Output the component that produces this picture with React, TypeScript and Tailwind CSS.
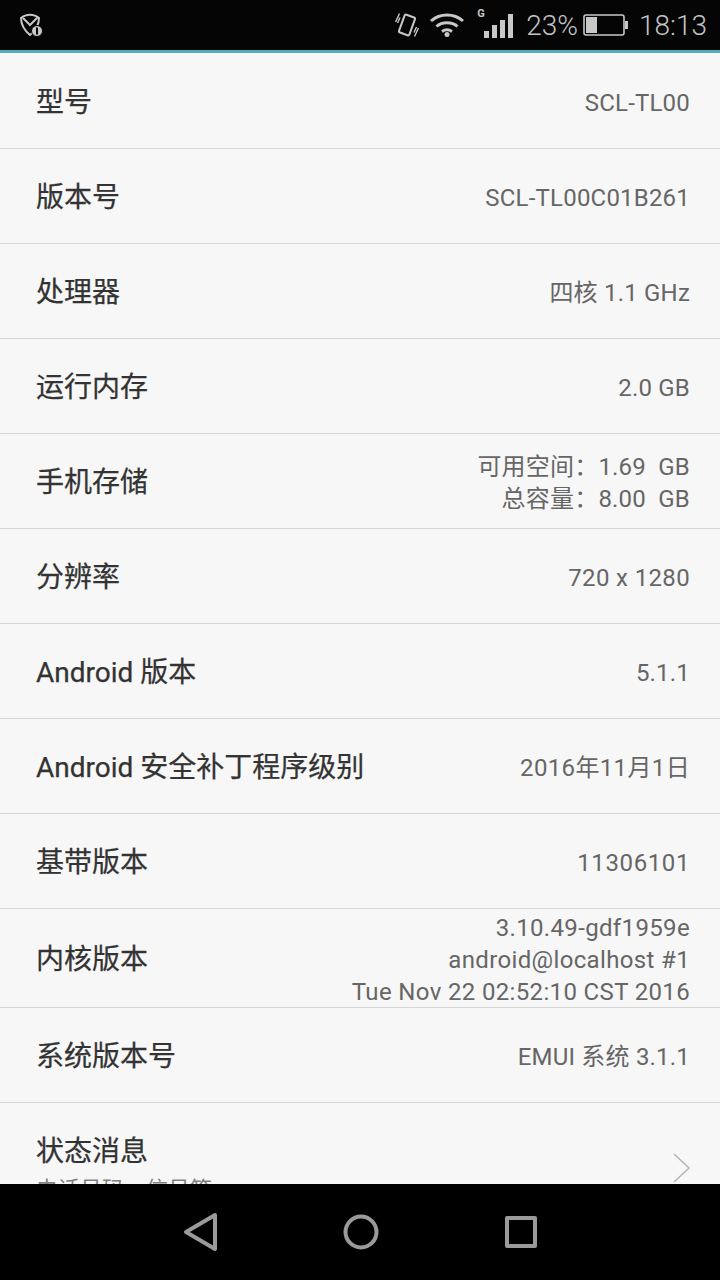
const rows: { label: string; value: string[]; h?: string; t?: string }[] = [
  { label: "型号", value: ["SCL-TL00"] },
  { label: "版本号", value: ["SCL-TL00C01B261"] },
  { label: "处理器", value: ["四核 1.1 GHz"] },
  { label: "运行内存", value: ["2.0 GB"] },
  { label: "手机存储", value: ["可用空间：1.69  GB", "总容量：8.00  GB"] },
  { label: "分辨率", value: ["720 x 1280"], t: "tracking-[0.35px]" },
  { label: "Android 版本", value: ["5.1.1"] },
  { label: "Android 安全补丁程序级别", value: ["2016年11月1日"], t: "tracking-[0.35px]" },
  { label: "基带版本", value: ["11306101"], t: "tracking-[0.6px]" },
  { label: "内核版本", value: ["3.10.49-gdf1959e", "android@localhost #1", "Tue Nov 22 02:52:10 CST 2016"], h: "tall", t: "tracking-[0.35px]" },
  { label: "系统版本号", value: ["EMUI 系统 3.1.1"] },
];

function Row({ label, value, h, t }: { label: string; value: string[]; h?: string; t?: string }) {
  return (
    <div className={`flex items-center justify-between border-b border-[#d6d6d6] pl-[36px] pr-[30px] pt-[4px] ${h === "tall" ? "h-[99px]" : "h-[95px]"}`}>
      <div className="text-[28px] leading-[36px] text-[#333333] whitespace-pre [-webkit-text-stroke:0.25px_#333333]">{label}</div>
      <div className={`flex flex-col items-end text-[24px] leading-[32px] text-[#666666] whitespace-pre ${t ?? "tracking-[0.2px]"}`}>
        {value.map((v) => (
          <div key={v}>{v}</div>
        ))}
      </div>
    </div>
  );
}

export default function App() {
  return (
    <div className="flex h-[1280px] w-[720px] flex-col overflow-hidden bg-[#f7f7f7] font-['Roboto','Noto_Sans_CJK_SC',sans-serif]">
      <div className="flex h-[50px] shrink-0 items-center justify-between bg-[#050505] pl-[19px] pr-[13px] text-[#c9c9c9]">
        <svg width="26" height="26" viewBox="0 0 26 26" fill="none" stroke="#c8c8c8" strokeWidth="2">
          <path d="M2 6 C7 1.5 15 1.5 20 6 C20 12 17 18 11 23 C5 18 2 12 2 6 Z" strokeLinejoin="round" />
          <path d="M4 6 L11 13 L19 5" />
          <circle cx="18" cy="19" r="5.5" fill="#c8c8c8" stroke="#050505" strokeWidth="1" />
          <rect x="17" y="15.5" width="2" height="7" fill="#050505" stroke="none" />
        </svg>
        <div className="flex items-center">
          <svg width="24" height="26" viewBox="0 0 24 26" fill="none" stroke="#c8c8c8" strokeWidth="2" className="mr-[11px]">
            <rect x="-5.5" y="-9.5" width="11" height="19" rx="1.5" transform="translate(12 13) rotate(20)" />
            <path d="M0.5 10 L4.5 1.5 M2.5 11 L5 5.5" strokeWidth="1.4" />
            <path d="M23.5 16 L19.5 24.5 M21.5 15 L19 20.5" strokeWidth="1.4" />
          </svg>
          <svg width="34" height="24" viewBox="0 0 34 24" fill="none" stroke="#c8c8c8" strokeWidth="3" className="mr-[20px]">
            <path d="M1 8 C10 0 24 0 33 8" />
            <path d="M6.5 13.5 C12 8.5 22 8.5 27.5 13.5" />
            <path d="M12 18.5 C15 16.5 19 16.5 22 18.5" />
            <circle cx="17" cy="21.5" r="2.5" fill="#c8c8c8" stroke="none" />
          </svg>
          <div className="relative mr-[14px] h-[32px] w-[28px]">
            <span className="absolute left-[-7px] top-[-2px] text-[11px] font-bold leading-[14px] text-[#c8c8c8]">G</span>
            <div className="absolute bottom-[3px] left-0 flex h-[24px] items-end gap-[3px]">
              <div className="h-[7px] w-[5px] bg-[#c8c8c8]" />
              <div className="h-[13px] w-[5px] bg-[#c8c8c8]" />
              <div className="h-[18px] w-[5px] bg-[#c8c8c8]" />
              <div className="h-[24px] w-[5px] bg-[#c8c8c8]" />
            </div>
          </div>
          <span className="pt-[2px] text-[28px] leading-[32px] font-light text-[#c4c4c4]">23%</span>
          <svg width="45" height="24" viewBox="0 0 45 24" fill="none" className="ml-[5px] mr-[11px]">
            <rect x="1" y="2" width="40" height="20" rx="2" stroke="#c8c8c8" strokeWidth="1.6" />
            <rect x="3" y="4" width="11" height="16" fill="#c8c8c8" />
            <rect x="42" y="8" width="3" height="8" fill="#c8c8c8" />
          </svg>
          <span className="pt-[2px] text-[28px] leading-[32px] font-light text-[#c4c4c4]">18:13</span>
        </div>
      </div>
      <div className="h-[3px] shrink-0 bg-[#54aeb6]" />
      <div className="min-h-0 flex-1 overflow-hidden pt-[1px]">
        {rows.map((r) => (
          <Row key={r.label} {...r} />
        ))}
        <div className="relative pl-[36px] pt-[31px]">
          <div className="text-[28px] leading-[36px] text-[#333333] [-webkit-text-stroke:0.25px_#333333]">状态消息</div>
          <div className="mt-[5px] text-[22px] leading-[30px] text-[#808080]">电话号码、信号等</div>
          <svg width="20" height="32" viewBox="0 0 20 32" fill="none" stroke="#b4b4b4" strokeWidth="1.5" className="absolute left-[672px] top-[49px]">
            <path d="M2 2 L17 16 L2 30" />
          </svg>
        </div>
      </div>
      <div className="flex h-[96px] shrink-0 items-center bg-black pl-[182px] pb-[1px]">
        <svg width="38" height="40" viewBox="0 0 38 40" fill="none" stroke="#9a9a9a" strokeWidth="4" strokeLinejoin="round">
          <path d="M33 3 L4 20 L33 37 Z" />
        </svg>
        <svg width="36" height="36" viewBox="0 0 36 36" fill="none" stroke="#9a9a9a" strokeWidth="4" className="ml-[123px]">
          <circle cx="18" cy="18" r="15.5" />
        </svg>
        <div className="ml-[126px] h-[32px] w-[32px] rounded-[2px] border-[4px] border-[#9a9a9a]" />
      </div>
    </div>
  );
}
